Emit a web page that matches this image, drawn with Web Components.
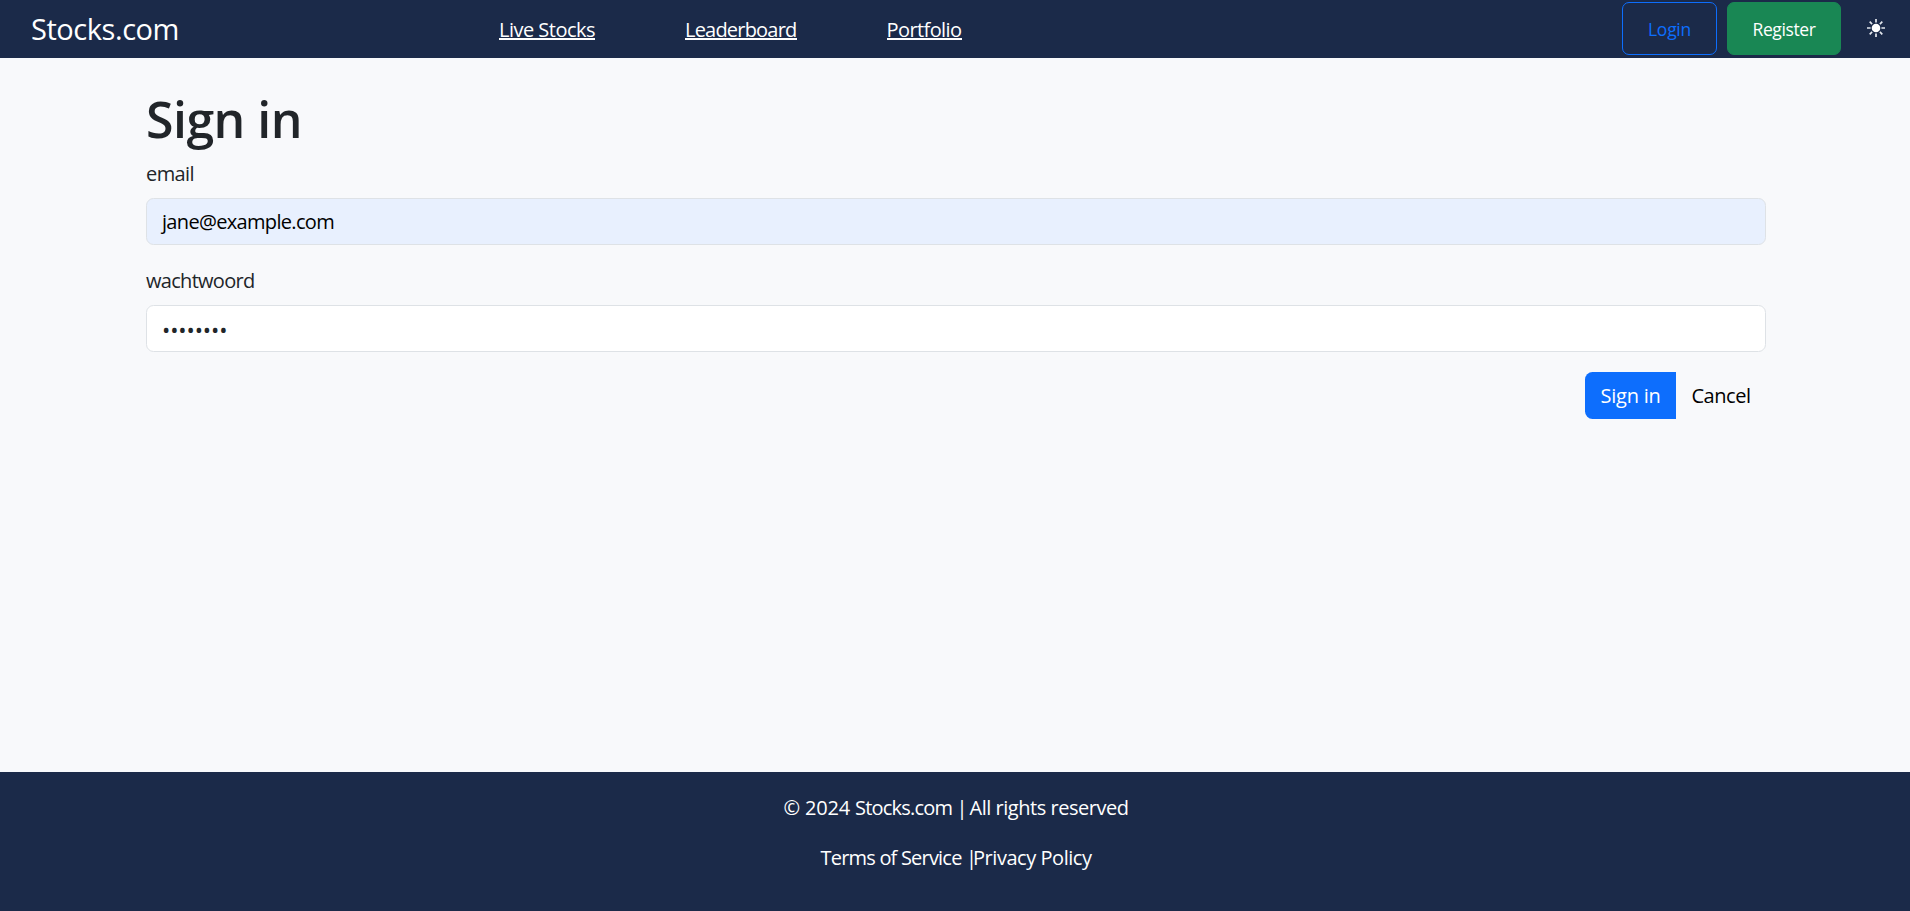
<!DOCTYPE html>
<html lang="en">
<head>
<meta charset="utf-8">
<title>Stocks.com</title>
<style>
html,body{margin:0;height:100%}
body{font:20px/30px "Open Sans","Noto Sans",sans-serif;color:#212529;background:#f8f9fb;overflow:hidden}
</style>
</head>
<body>
<stocks-app></stocks-app>
<script>
const define = (name, html, ready) => customElements.define(name, class extends HTMLElement {
  connectedCallback() {
    if (this.shadowRoot) return;
    this.attachShadow({ mode: 'open' }).innerHTML = html;
    if (ready) ready(this);
  }
});

/* Text tracked to an even width in pixels. */
define('fit-text', `<style>
:host{display:inline-block;white-space:pre;flex:none}
span{display:inline-block}
</style><span><slot></slot></span>`, el => {
  const span = el.shadowRoot.querySelector('span');
  const width = Number(el.getAttribute('width'));
  const count = [...el.textContent].length;
  const gap = (width - span.getBoundingClientRect().width) / count;
  span.style.letterSpacing = gap + 'px';
  el.style.width = width + 'px';
});

define('nav-link', `<style>
:host{display:block}
a{color:#fff;display:block;text-decoration:none;height:25px;border-bottom:2px solid #fff;box-sizing:border-box;line-height:30px}
</style><a><slot></slot></a>`);

define('nav-button', `<style>
:host{display:flex;align-items:center;justify-content:center;box-sizing:border-box;height:53px;border:1px solid;border-radius:7px;font-size:17.5px;line-height:26px}
:host([kind=login]){width:95px;color:#0d6efd;border-color:#0d6efd}
:host([kind=register]){width:114px;color:#fff;background:#198754;border-color:#198754}
</style><slot></slot>`);

define('sun-icon', `<style>:host{display:block;width:18px;height:18px}svg{display:block}</style>
<svg width="18" height="18" viewBox="0 0 18 18"><circle cx="9" cy="9" r="4.3" fill="#fff"/>
<path d="M9 0v3.6M9 14.4V18M0 9h3.6M14.4 9H18M2.7 2.7l2.4 2.4M12.9 12.9l2.4 2.4M2.7 15.3l2.4-2.4M12.9 5.1l2.4-2.4" stroke="#e4e8ee" stroke-width="1.7" fill="none"/></svg>`);

define('top-bar', `<style>
:host{display:flex;height:58px;flex:none;box-sizing:border-box;background:#1b2a49;color:#fff;padding-left:31px;align-items:flex-start}
.brand{font-size:29px;line-height:42px;width:468px;padding-top:8px;box-sizing:border-box}
nav{display:flex;gap:90px;padding-top:15px;flex:1}
.right{display:flex;gap:10px;padding-top:2px}
sun-icon{margin:17px 25px 0 16px}
</style>
<div class="brand"><fit-text width="148">Stocks.com</fit-text></div>
<nav><nav-link><fit-text width="96">Live Stocks</fit-text></nav-link><nav-link><fit-text width="111.5">Leaderboard</fit-text></nav-link><nav-link><fit-text width="75">Portfolio</fit-text></nav-link></nav>
<div class="right"><nav-button kind="login"><fit-text width="43">Login</fit-text></nav-button><nav-button kind="register"><fit-text width="63">Register</fit-text></nav-button><sun-icon></sun-icon></div>`);

define('form-field', `<style>
:host{display:block;margin-bottom:20px}
.label{height:30px;padding-top:1px;margin-bottom:9px}
.box{height:47px;box-sizing:border-box;border:1px solid #dee2e6;border-radius:7.5px;background:#fff;padding:8px 15px 0;line-height:30px}
:host([filled]) .box{background:#e8f0fe;color:#000}
</style><div class="label"><slot name="label"></slot></div><div class="box"><slot></slot></div>`);

define('form-button', `<style>
:host{display:flex;height:47px;box-sizing:border-box;padding:9px 15.5px 0 15.5px;color:#000}
:host([primary]){background:#0d6efd;color:#fff;border-radius:7.5px 0 0 7.5px}
</style><slot></slot>`);

define('sign-in-form', `<style>
:host{display:block;flex:1;padding:31px 144px 0 146px}
h1{font-size:50px;line-height:60px;font-weight:560;margin:0 0 9px}
h1 fit-text{display:block}
.dots{font-size:22px;line-height:30px}
.actions{display:flex;justify-content:flex-end}
</style>
<h1><fit-text width="156">Sign in</fit-text></h1>
<form-field filled><fit-text slot="label" width="48">email</fit-text><fit-text width="172">jane@example.com</fit-text></form-field>
<form-field><fit-text slot="label" width="108.5">wachtwoord</fit-text><fit-text class="dots" width="65.3">••••••••</fit-text></form-field>
<div class="actions"><form-button primary><fit-text width="60">Sign in</fit-text></form-button><form-button><fit-text width="59">Cancel</fit-text></form-button></div>`);

define('page-footer', `<style>
:host{display:flex;flex-direction:column;align-items:center;gap:20px;height:139px;flex:none;box-sizing:border-box;background:#1b2a49;color:#fff;padding:21px 0 0 2px}
div{height:30px;display:flex}
</style>
<div><fit-text width="71.5">© 2024 </fit-text><fit-text width="101.5">Stocks.com </fit-text><fit-text width="13">| </fit-text><fit-text width="159">All rights reserved</fit-text></div>
<div><fit-text width="145.5">Terms of Service </fit-text><fit-text width="7">|</fit-text><fit-text width="118.5">Privacy Policy</fit-text></div>`);

define('stocks-app', `<style>:host{display:flex;flex-direction:column;height:100vh}</style>
<top-bar></top-bar><sign-in-form></sign-in-form><page-footer></page-footer>`);
</script>
</body>
</html>
